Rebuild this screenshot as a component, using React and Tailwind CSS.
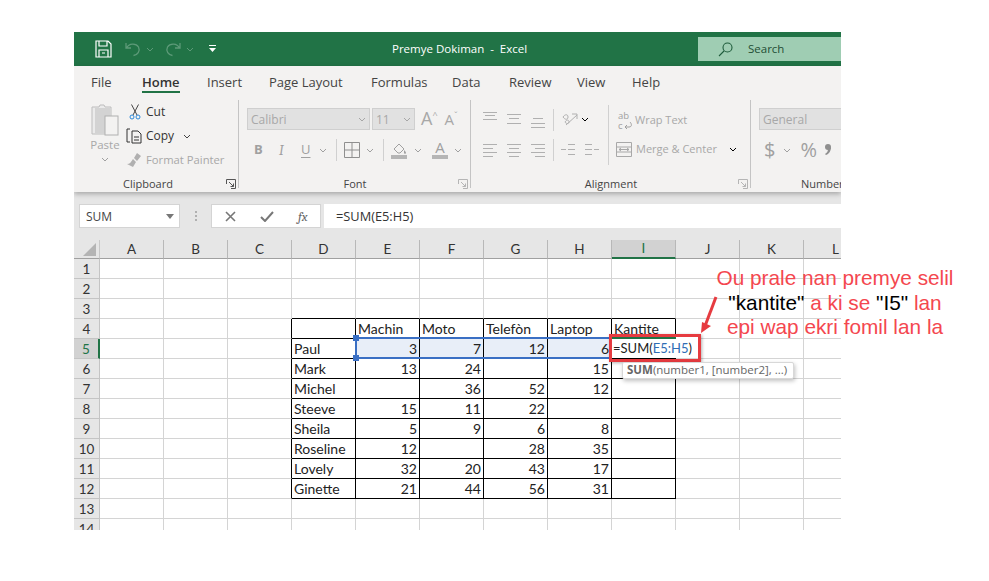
import { Fragment } from 'react'

const uiFont = { fontFamily: '"Open Sans", "Noto Sans", sans-serif' }
const tabs = [
  ['File', 'w-[51px]'], ['Home', 'w-[65px]'], ['Insert', 'w-[62px]'], ['Page Layout', 'w-[102px]'],
  ['Formulas', 'w-[81px]'], ['Data', 'w-[57px]'], ['Review', 'w-[68px]'], ['View', 'w-[55px]'], ['Help', 'w-[50px]'],
]
const columns = ['A', 'B', 'C', 'D', 'E', 'F', 'G', 'H', 'I', 'J', 'K', 'L']
const rowNumbers = [1, 2, 3, 4, 5, 6, 7, 8, 9, 10, 11, 12, 13, 14]
const sheet = {
  4: ['', 'Machin', 'Moto', 'Telefòn', 'Laptop', 'Kantite'],
  5: ['Paul', 3, 7, 12, 6, ''],
  6: ['Mark', 13, 24, '', 15, ''],
  7: ['Michel', '', 36, 52, 12, ''],
  8: ['Steeve', 15, 11, 22, '', ''],
  9: ['Sheila', 5, 9, 6, 8, ''],
  10: ['Roseline', 12, '', 28, 35, ''],
  11: ['Lovely', 32, 20, 43, 17, ''],
  12: ['Ginette', 21, 44, 56, 31, ''],
}

function Chevron({ className = 'text-[#a6a6a6]' }) {
  return (
    <svg width="8" height="5" viewBox="0 0 8 5" fill="none" stroke="currentColor" strokeWidth="1" className={className}>
      <path d="M1 1l3 3 3-3" />
    </svg>
  )
}

function Launcher({ dark }) {
  return (
    <svg width="10" height="10" viewBox="0 0 10 10" fill="none" stroke={dark ? '#555' : '#b5b5b5'} strokeWidth="1">
      <path d="M.5 5V.5H9.500V9.500H5M3 3l4.500 4.500M7.500 4.500v3H4.500" />
    </svg>
  )
}

function Lines({ rows }) {
  return (
    <svg width="15" height="16" viewBox="0 0 15 16" stroke="#b0b0b0" strokeWidth="1">
      {rows.map(([x1, x2, y]) => <path key={`${x1}-${y}`} d={`M${x1} ${y + 0.5}H${x2}`} />)}
    </svg>
  )
}

function Group({ width, label, labelClass = 'pr-0', launcher, dark, children }) {
  return (
    <div className={`relative flex h-full shrink-0 flex-col ${width}`}>
      <div className="flex-1">{children}</div>
      <div className={`flex h-[12px] items-center justify-center text-[11px] text-[#444] ${labelClass}`}>{label}</div>
      {launcher && <div className="absolute right-[3px] bottom-[1px]"><Launcher dark={dark} /></div>}
      <div className="absolute top-0 right-0 bottom-[2px] w-px bg-[#c4c4c4]" />
    </div>
  )
}

function Dropdown({ width, text }) {
  return (
    <div className={`flex h-[22px] items-center justify-between border border-[#cfcfcf] bg-[#e1e1e1] px-[3px] text-[12px] text-[#a8a8a8] ${width}`}>
      <span className="pt-px">{text}</span>
      <Chevron />
    </div>
  )
}

function TitleBar() {
  return (
    <div className="flex h-[34px] items-center bg-[#217346] text-white">
      <div className="flex w-[318px] items-center pl-[21px]">
        <svg width="17" height="18" viewBox="0 0 17 18" fill="none" stroke="#fff" strokeWidth="1.200">
          <path d="M1 1h12l3 3v13H1zM4 1v5h8V1M4 17v-7h9v7M7 13h3" />
        </svg>
        <svg className="ml-[13px]" width="16" height="16" viewBox="0 0 16 16" fill="none" stroke="#5d9a78" strokeWidth="1.300">
          <path d="M1 2v5h5M1.500 7C4 2 11 2 13.500 6c2 4-1 8-5 8.500" />
        </svg>
        <Chevron className="ml-[5px] text-[#5d9a78]" />
        <svg className="ml-[11px]" width="16" height="16" viewBox="0 0 16 16" fill="none" stroke="#5d9a78" strokeWidth="1.300">
          <path d="M15 2v5h-5M14.500 7C12 2 5 2 2.500 6c-2 4 1 8 5 8.500" />
        </svg>
        <Chevron className="ml-[5px] text-[#5d9a78]" />
        <svg className="ml-[14px]" width="9" height="8" viewBox="0 0 9 8" fill="#fff">
          <path d="M1 0h7v1H1zM1 3h7L4.500 7z" />
        </svg>
      </div>
      <div className="w-[306px] pb-px whitespace-pre text-[11.500px]">Premye Dokiman  -  Excel</div>
      <div className="flex h-[24px] flex-1 items-center bg-[#9fcdb3] pl-[20px] text-[11.500px] text-[#1f4d35]">
        <svg width="15" height="15" viewBox="0 0 15 15" fill="none" stroke="#1f5c3c" strokeWidth="1.100">
          <circle cx="9.500" cy="5.500" r="4.500" />
          <path d="M6 9l-5 5" />
        </svg>
        <span className="ml-[15px]">Search</span>
      </div>
    </div>
  )
}

function ClipboardGroup() {
  return (
    <Group width="w-[165px]" label="Clipboard" labelClass="pr-[17px]" launcher dark>
      <div className="flex">
        <div className="ml-[15px] flex w-[32px] flex-col items-center pt-[4px] text-[11.500px] text-[#a8a8a8]">
          <svg width="28" height="32" viewBox="0 0 28 32" fill="none">
            <path d="M1 3h7l1-2h4l1 2h6v27H1z" fill="#ebebeb" stroke="#bdbdbd" />
            <rect x="4" y="4" width="15" height="25" fill="#d3d3d3" />
            <rect x="14" y="12" width="13" height="19" fill="#f3f2f1" stroke="#b0b0b0" />
          </svg>
          <span className="mt-[1px] leading-[16px]">Paste</span>
          <Chevron className="mt-[4px] text-[#a0a0a0]" />
        </div>
        <div className="ml-[5px] flex flex-col text-[12px] text-[#333]">
          <div className="flex h-[24px] items-center pl-[3px]">
            <svg width="12" height="16" viewBox="0 0 12 16" fill="none" stroke="#444" strokeWidth="1">
              <path d="M2.500 0.500L8 11M9.500 0.500L4 11" />
              <circle cx="3" cy="13" r="2" stroke="#2b88d8" />
              <circle cx="9" cy="13" r="2" stroke="#2b88d8" />
            </svg>
            <span className="ml-[5px]">Cut</span>
          </div>
          <div className="flex h-[24px] items-center">
            <svg width="16" height="16" viewBox="0 0 16 16" fill="none" stroke="#333" strokeWidth="1">
              <path d="M4 1H1v13h3M6 3h6l3 3v9H6zM8 9h5M8 12h5" />
            </svg>
            <span className="ml-[4px]">Copy</span>
            <Chevron className="ml-[9px] text-[#444]" />
          </div>
          <div className="flex h-[24px] items-center text-[11.250px] text-[#a8a8a8]">
            <svg width="16" height="16" viewBox="0 0 16 16" fill="#b0b0b0">
              <path d="M11 1l4 3-4 5-3-3zM7 7l3 3-3 5-6-3c3 0 4-2 6-5z" />
            </svg>
            <span className="ml-[4px]">Format Painter</span>
          </div>
        </div>
      </div>
    </Group>
  )
}

function FontGroup() {
  return (
    <Group width="w-[232px]" label="Font" launcher>
      <div className="flex items-center pt-[8px] pl-[8px]">
        <Dropdown width="w-[123px]" text="Calibri" />
        <Dropdown width="ml-[2px] w-[43px]" text="11" />
        <span className="ml-[6px] flex h-[22px] items-start text-[18px] leading-[21px] text-[#a8a8a8]">A<span className="text-[9px] leading-[14px]">^</span></span>
        <span className="ml-[7px] flex h-[22px] items-start text-[15px] leading-[22px] text-[#a8a8a8]">A<span className="text-[9px] leading-[16px]">ˇ</span></span>
      </div>
      <div className="mt-[9px] flex h-[22px] items-center pl-[15px] text-[13px] text-[#a0a0a0]">
        <span className="w-[10px] font-bold">B</span>
        <span className="ml-[15px] w-[8px] font-serif text-[14px] italic">I</span>
        <span className="ml-[14px] w-[10px] underline underline-offset-[3px]">U</span>
        <Chevron className="ml-[8px]" />
        <div className="ml-[9px] h-[22px] w-px bg-[#d0d0d0]" />
        <svg className="ml-[7px]" width="16" height="16" viewBox="0 0 16 16" fill="none" stroke="#8f8f8f">
          <path d="M.5.500h15v15H.500zM8 .500v15M.5 8h15" />
        </svg>
        <Chevron className="ml-[6px]" />
        <div className="ml-[9px] h-[22px] w-px bg-[#d0d0d0]" />
        <svg className="ml-[7px]" width="17" height="17" viewBox="0 0 17 17">
          <path d="M3 7l5-5 5 5-4 4-2 0z" fill="none" stroke="#a0a0a0" />
          <path d="M13 8c1 1 2 2 2 3s-2 1-2 0z" fill="#a0a0a0" />
          <rect x="0" y="13" width="16" height="4" fill="#b5b5b5" />
        </svg>
        <Chevron className="ml-[6px]" />
        <div className="ml-[10px] flex w-[16px] flex-col items-center">
          <span className="text-[15px] leading-[13px]">A</span>
          <div className="mt-[1px] h-[4px] w-[16px] bg-[#b5b5b5]" />
        </div>
        <Chevron className="ml-[6px]" />
      </div>
    </Group>
  )
}

function AlignmentGroup() {
  return (
    <Group width="w-[280px]" label="Alignment" launcher>
      <div className="flex">
        <div className="flex w-[137px] flex-col pl-[12px]">
          <div className="flex h-[38px] items-start pt-[9px]">
            <div className="mt-[3px]"><Lines rows={[[0, 14, 0], [2, 12, 3], [0, 14, 7]]} /></div>
            <div className="ml-[9px] mt-[3px]"><Lines rows={[[0, 14, 2], [2, 12, 6], [0, 14, 11]]} /></div>
            <div className="ml-[9px] mt-[3px]"><Lines rows={[[2, 12, 6], [0, 14, 11], [0, 14, 15]]} /></div>
            <div className="ml-[7px] h-[22px] w-px bg-[#d0d0d0]" />
            <svg className="ml-[7px] mt-[2px]" width="18" height="16" viewBox="0 0 18 16" fill="none" stroke="#b0b0b0">
              <path d="M5 14L16 4M11 3h5v5M2 6c2-3 5-3 5 0s-3 3-5 0M4 11c2-3 4-2 4 0s-3 2-4 0" />
            </svg>
            <Chevron className="ml-[2px] mt-[8px]" />
          </div>
          <div className="flex h-[24px] items-center">
            <Lines rows={[[0, 14, 2], [0, 10, 6], [0, 14, 10], [0, 10, 14]]} />
            <div className="ml-[9px]"><Lines rows={[[0, 14, 2], [2, 12, 6], [0, 14, 10], [2, 12, 14]]} /></div>
            <div className="ml-[9px]"><Lines rows={[[0, 14, 2], [4, 14, 6], [0, 14, 10], [4, 14, 14]]} /></div>
            <div className="ml-[7px] h-[22px] w-px bg-[#d0d0d0]" />
            <div className="ml-[7px]"><Lines rows={[[0, 5, 7], [7, 14, 2], [7, 14, 7], [7, 14, 12]]} /></div>
            <div className="ml-[9px]"><Lines rows={[[0, 7, 2], [9, 14, 7], [0, 7, 7], [0, 7, 12]]} /></div>
          </div>
        </div>
        <div className="mt-[5px] flex h-[60px] flex-col border-l border-[#d0d0d0]">
          <div className="flex h-[31px] items-center pl-[9px]">
            <div className="flex w-[15px] flex-col text-[9.500px] leading-[10px] text-[#a0a0a0]">
              <span>ab</span>
              <span className="flex items-center">
                c
                <svg className="ml-px" width="8" height="8" viewBox="0 0 8 8" fill="none" stroke="#a0a0a0"><path d="M6 0c2 2 2 5-1 5H1M3 3L1 5l2 2" /></svg>
              </span>
            </div>
            <span className="ml-[2px] whitespace-nowrap text-[11px] text-[#a8a8a8]">Wrap Text</span>
          </div>
          <div className="flex h-[26px] items-center pl-[7px]">
            <svg width="16" height="15" viewBox="0 0 16 15" fill="none" stroke="#a8a8a8">
              <path d="M.5.500h15v14H.500zM.5 5h15M.5 10h15M3 7.500h10M5 6l-2 1.500L5 9M11 6l2 1.500L11 9" />
            </svg>
            <span className="ml-[4px] whitespace-nowrap text-[11px] text-[#a8a8a8]">Merge &amp; Center</span>
            <Chevron className="ml-[12px]" />
          </div>
        </div>
      </div>
    </Group>
  )
}

function NumberGroup() {
  return (
    <div className="flex h-full flex-1 flex-col">
      <div className="flex-1 pt-[8px] pl-[8px]">
        <div className="flex h-[22px] items-center border border-[#cfcfcf] bg-[#e1e1e1] pt-px pl-[3px] text-[12px] text-[#a8a8a8]">General</div>
        <div className="mt-[9px] flex h-[22px] items-center pl-[5px] text-[#a0a0a0]">
          <span className="text-[20px]">$</span>
          <Chevron className="ml-[8px]" />
          <span className="ml-[9px] text-[20px]">%</span>
          <svg className="ml-[8px]" width="6" height="12" viewBox="0 0 6 12" fill="#8f8f8f">
            <circle cx="3" cy="3" r="3" />
            <path d="M6 3c0 4-2 7-5 8l-1-1c2-1 3-3 3-5z" />
          </svg>
        </div>
      </div>
      <div className="flex h-[12px] items-center pl-[50px] text-[11px] whitespace-nowrap text-[#444]">Number</div>
    </div>
  )
}

function Ribbon() {
  return (
    <div className="relative z-10 h-[126px] bg-[#f3f2f1] shadow-[0_2px_5px_rgba(0,0,0,0.28)]">
      <div className="flex h-[34px] items-center pl-[17px] text-[13px] text-[#444]">
        {tabs.map(([name, width]) => (
          <div key={name} className={`relative h-full leading-[32px] ${width}`}>
            <span className={name === 'Home' ? 'font-semibold text-[#333]' : ''}>{name}</span>
            {name === 'Home' && <div className="absolute bottom-[7px] left-0 h-[2px] w-[38px] bg-[#217346]" />}
          </div>
        ))}
      </div>
      <div className="flex h-[90px]">
        <ClipboardGroup />
        <FontGroup />
        <AlignmentGroup />
        <NumberGroup />
      </div>
    </div>
  )
}

function FormulaBar() {
  return (
    <div className="flex h-[48px] items-center bg-[#e6e6e6] pl-[5px] text-[12px] text-[#444]">
      <div className="flex h-[24px] w-[101px] items-center justify-between border border-[#d4d4d4] bg-white pr-[5px] pl-[6px]">
        <span className="pt-px">SUM</span>
        <svg width="8" height="5" viewBox="0 0 8 5" fill="#777"><path d="M0 0h8L4 5z" /></svg>
      </div>
      <div className="ml-[15px] flex h-[10px] w-[2px] flex-col justify-between">
        <div className="h-[2px] bg-[#b0b0b0]" />
        <div className="h-[2px] bg-[#b0b0b0]" />
        <div className="h-[2px] bg-[#b0b0b0]" />
      </div>
      <div className="ml-[14px] flex h-[24px] w-[110px] items-center border border-[#d4d4d4] bg-white pl-[13px]">
        <svg width="11" height="11" viewBox="0 0 11 11" fill="none" stroke="#777" strokeWidth="1.600"><path d="M1 1l9 9M10 1l-9 9" /></svg>
        <svg className="ml-[24px]" width="14" height="11" viewBox="0 0 14 11" fill="none" stroke="#777" strokeWidth="2"><path d="M1 6l4 4 8-9" /></svg>
        <span className="ml-[24px] font-serif text-[13px] leading-none text-[#666] italic">fx</span>
      </div>
      <div className="ml-[3px] flex h-[24px] flex-1 items-center bg-white pt-px pl-[12px] text-[12.800px] text-[#333]">=SUM(E5:H5)</div>
    </div>
  )
}

function cellBorders(row, col) {
  const right = row >= 4 && row <= 12 && col >= 2 && col <= 8
  const bottom = row >= 3 && row <= 12 && col >= 3 && col <= 8
  return `${right ? 'border-r-black' : 'border-r-[#d4d4d4]'} ${bottom ? 'border-b-black' : 'border-b-[#d4d4d4]'}`
}

// the cell being edited: white edit box that runs past the cell, red callout box, formula hint
function FormulaCell() {
  return (
    <>
      <div className="absolute top-[-1px] left-[-1px] z-20 flex h-[20px] w-[87px] items-start bg-white pl-[2px] text-[13px] leading-[20px] whitespace-nowrap text-[#222]">
        <span>=SUM(<span className="text-[#2f6db5]">E5:H5</span>)</span>
      </div>
      <div className="absolute top-[-2px] right-[-1px] left-[-1px] z-20 h-[2px] bg-[#217346]" />
      <div className="absolute top-[-5px] left-[-3px] z-30 h-[28px] w-[92px] border-[3px] border-[#e63b40] shadow-[1px_1px_3px_rgba(0,0,0,0.3)]" />
      <div className="absolute top-[23px] left-[10px] z-30 h-[17px] w-[172px] rounded-[2px] border border-[#d8d8d8] bg-white pl-[4px] text-[11.500px] leading-[14px] whitespace-nowrap text-[#666] shadow-[1px_2px_4px_rgba(0,0,0,0.25)]" style={uiFont}>
        <b>SUM</b>(number1, [number2], ...)
      </div>
    </>
  )
}

function Selection() {
  return (
    <div className="absolute top-[-2px] left-[-1px] z-10 h-[22px] w-[254px]">
      <div className="absolute top-0 left-0 h-[2px] w-full bg-[#3a6fc4]" />
      <div className="absolute bottom-0 left-0 h-[2px] w-full bg-[#3a6fc4]" />
      <div className="absolute top-[4px] left-0 h-[14px] w-[2px] bg-[#3a6fc4]" />
      <div className="absolute top-[-2px] left-[-2px] h-[6px] w-[6px] bg-[#3a6fc4]" />
      <div className="absolute bottom-[-2px] left-[-2px] h-[6px] w-[6px] bg-[#3a6fc4]" />
    </div>
  )
}

function Sheet() {
  return (
    <div className="grid grid-cols-[26px_repeat(12,64px)] grid-rows-[19px] auto-rows-[20px] bg-white" style={{ fontFamily: 'Lato, "Noto Sans", sans-serif' }}>
      <div className="flex items-end justify-end border-r border-b border-r-[#c8c8c8] border-b-[#a0a0a0] bg-[#e6e6e6] pr-[3px] pb-[2px]">
        <svg width="13" height="13" viewBox="0 0 13 13" fill="#b4b4b4"><path d="M13 0v13H0z" /></svg>
      </div>
      {columns.map(name => (
        <div
          key={name}
          className={`flex items-center justify-center border-r text-[13.500px] ${
            name === 'I'
              ? 'border-b-2 border-r-[#b8b8b8] border-b-[#217346] bg-[#d2d2d2] text-[#217346]'
              : 'border-b border-r-[#b8b8b8] border-b-[#a0a0a0] bg-[#e6e6e6] text-[#333]'
          }`}
        >
          {name}
        </div>
      ))}
      {rowNumbers.map(row => (
        <Fragment key={row}>
          <div
            className={`flex items-center justify-center border-b border-b-[#c4c4c4] pt-px text-[13.500px] ${
              row === 5
                ? 'border-r-2 border-r-[#217346] bg-[#d2d2d2] text-[#217346]'
                : 'border-r border-r-[#c4c4c4] bg-[#e6e6e6] text-[#333]'
            }`}
          >
            {row}
          </div>
          {columns.map((name, col) => {
            const value = sheet[row] && col >= 3 && col <= 8 ? sheet[row][col - 3] : ''
            const numeric = typeof value === 'number'
            const selected = row === 5 && col >= 4 && col <= 7
            return (
              <div
                key={name}
                className={`relative border-r border-b text-[14px] leading-[19px] text-[#222] ${cellBorders(row, col)} ${selected ? 'bg-[#e8eef8]' : ''} ${numeric ? 'pr-[2px] text-right' : 'pl-[2px]'}`}
              >
                {value}
                {row === 5 && col === 4 && <Selection />}
                {row === 5 && col === 8 && <FormulaCell />}
              </div>
            )
          })}
        </Fragment>
      ))}
    </div>
  )
}

export default function App() {
  return (
    <div className="relative h-[581px] w-[989px] overflow-hidden bg-white pt-[32px] pl-[74px]" style={uiFont}>
      <div className="h-[498px] w-[767px] overflow-hidden">
        <TitleBar />
        <Ribbon />
        <FormulaBar />
        <Sheet />
      </div>

      <svg className="absolute top-[295px] left-[698px] z-40" width="22" height="40" viewBox="0 0 22 40">
        <path d="M18 2L7 31" stroke="#e63b40" strokeWidth="3" fill="none" />
        <path d="M3 38l1-11 9 4z" fill="#e63b40" />
      </svg>
      <div className="absolute top-[266px] left-[700px] z-40 w-[270px] text-center text-[20.800px] leading-[24.500px] text-[#f4474f]" style={{ fontFamily: '"Liberation Sans", sans-serif' }}>
        <div>Ou prale nan premye selil</div>
        <div><span className="text-black">"kantite"</span> a ki se <span className="text-black">"I5"</span> lan</div>
        <div>epi wap ekri fomil lan la</div>
      </div>
    </div>
  )
}
